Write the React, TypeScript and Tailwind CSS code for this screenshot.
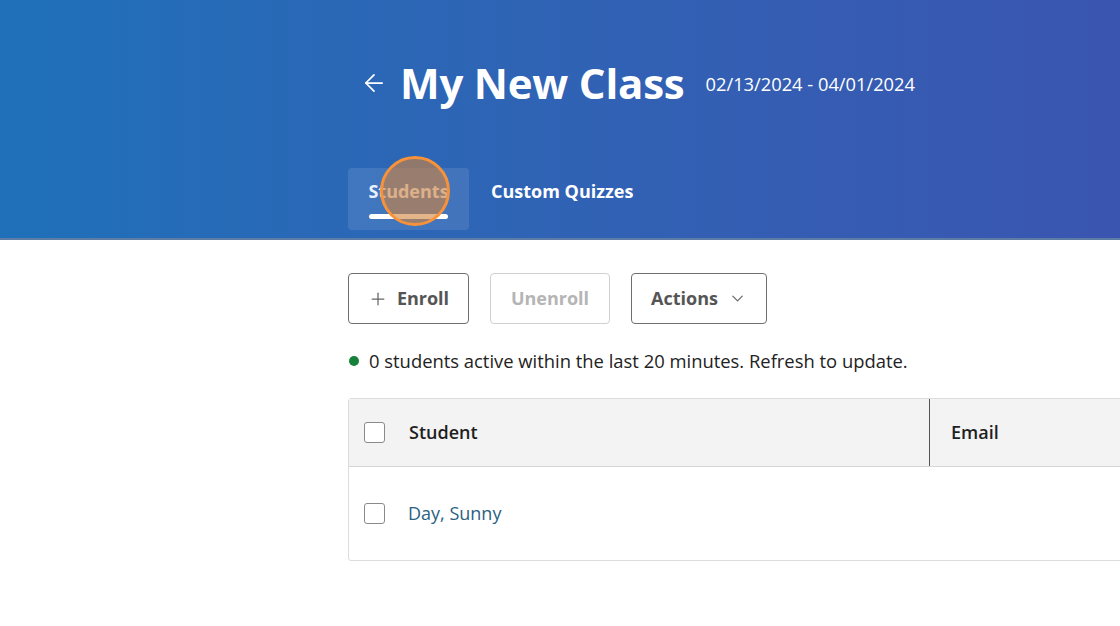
import { ArrowLeft, Plus, ChevronDown } from "lucide-react";

function Checkbox() {
  return <div className="w-[21px] h-[21px] rounded-[3px] border border-[#8a8a8a] bg-white shrink-0" />;
}

export default function App() {
  return (
    <div className="w-[1120px] h-[626px] overflow-hidden bg-white font-['Open_Sans',sans-serif] text-[#1f1f1f]">
      {/* header */}
      <header className="h-[240px] bg-gradient-to-r from-[#1e70b9] to-[#3a55b0] border-b-2 border-[#5d7ca6]">
        <div className="pl-[348px] pt-[56px]">
          <div className="flex items-center h-[54px]">
            <ArrowLeft className="w-[28px] h-[28px] text-white ml-[12px]" strokeWidth={1.5} />
            <h1 className="ml-[12px] text-[42px] font-bold text-white leading-none tracking-[-0.2px]">My New Class</h1>
            <span className="ml-[21px] mt-[2px] text-[18.3px] text-white">02/13/2024 - 04/01/2024</span>
          </div>
          <nav className="flex items-start mt-[58px] gap-[1px]">
            <div className="relative h-[62px] w-[121px] rounded-[4px] bg-white/10 flex flex-col items-center pt-[11px]">
              <span className="text-[18px] leading-[24px] font-bold text-[#eaf2ff]">Students</span>
              <span className="block mt-[11px] h-[5px] w-[79px] rounded-full bg-white" />
              {/* click indicator */}
              <div className="absolute left-[32px] top-[-12px] w-[70px] h-[70px] rounded-full border-[3px] border-[#f7923a] bg-[#d4843c]/60" />
            </div>
            <div className="h-[62px] px-[21px] pt-[11px]">
              <span className="text-[18px] leading-[24px] font-bold text-white">Custom Quizzes</span>
            </div>
          </nav>
        </div>
      </header>

      {/* body */}
      <main className="pl-[348px] pt-[33px]">
        <div className="flex gap-[21px]">
          <button className="h-[51px] w-[121px] rounded-[4px] border border-[#6f6f6f] flex items-center justify-center gap-[9px] text-[18px] font-bold text-[#555]">
            <Plus className="w-[20px] h-[20px] text-[#666]" strokeWidth={1.5} />
            Enroll
          </button>
          <button className="h-[51px] w-[120px] rounded-[4px] border border-[#d0d0d0] flex items-center justify-center text-[18px] font-bold text-[#b5b5b5]">
            Unenroll
          </button>
          <button className="h-[51px] w-[136px] rounded-[4px] border border-[#6f6f6f] flex items-center justify-center gap-[10px] text-[18px] font-bold text-[#555]">
            Actions
            <ChevronDown className="w-[19px] h-[19px] text-[#666]" strokeWidth={1.5} />
          </button>
        </div>

        <div className="flex items-center mt-[24px] h-[25px]">
          <span className="w-[10px] h-[10px] rounded-full bg-[#16813a] ml-[1px]" />
          <span className="ml-[10px] text-[18.4px] text-[#222]">0 students active within the last 20 minutes. Refresh to update.</span>
        </div>

        <div className="mt-[25px] w-[900px] rounded-[3px] border border-[#dcdcdc]">
          <div className="h-[68px] bg-[#f3f3f4] border-b border-[#d6d6d6] flex items-stretch">
            <div className="w-[581px] flex items-center pl-[15px] border-r border-[#555]">
              <Checkbox />
              <span className="ml-[24px] text-[18px] font-semibold text-[#1f1f1f]">Student</span>
            </div>
            <div className="flex items-center pl-[21px]">
              <span className="text-[18px] font-semibold text-[#1f1f1f]">Email</span>
            </div>
          </div>
          <div className="h-[93px] flex items-center pl-[15px]">
            <Checkbox />
            <span className="ml-[23px] text-[18px] text-[#2b6182]">Day, Sunny</span>
          </div>
        </div>
      </main>
    </div>
  );
}
